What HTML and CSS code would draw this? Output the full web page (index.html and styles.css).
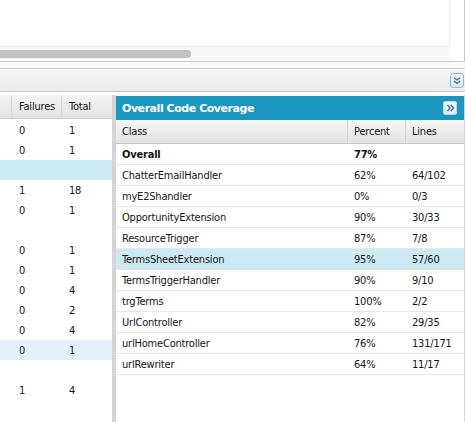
FILE: index.html
```html
<!DOCTYPE html>
<html>
<head>
<meta charset="utf-8">
<link rel="stylesheet" href="styles.css">
</head>
<body>
<div class="editor">
  <div class="editor-main">
    <div class="editor-content"></div>
    <div class="hscroll"><div class="hthumb"></div></div>
  </div>
  <div class="vscroll"><div class="vtrack"></div><div class="corner"></div></div>
</div>
<div class="spacer"></div>
<div class="toolbar">
  <button class="tb-btn" aria-label="collapse">
    <svg width="8" height="9" viewBox="0 0 8 9"><path d="M1 1.5 L4 4 L7 1.5 M1 5 L4 7.5 L7 5" fill="none" stroke="#3b6ea8" stroke-width="1.3"/></svg>
  </button>
</div>
<div class="panels">
  <div class="tests">
    <div class="t-head">
      <div class="c0"></div><div class="c1">Failures</div><div class="c2">Total</div>
    </div>
    <div class="t-row"><div class="c0"></div><div class="c1">0</div><div class="c2">1</div></div>
    <div class="t-row"><div class="c0"></div><div class="c1">0</div><div class="c2">1</div></div>
    <div class="t-row sel"><div class="c0"></div><div class="c1"></div><div class="c2"></div></div>
    <div class="t-row"><div class="c0"></div><div class="c1">1</div><div class="c2">18</div></div>
    <div class="t-row"><div class="c0"></div><div class="c1">0</div><div class="c2">1</div></div>
    <div class="t-row"><div class="c0"></div><div class="c1"></div><div class="c2"></div></div>
    <div class="t-row"><div class="c0"></div><div class="c1">0</div><div class="c2">1</div></div>
    <div class="t-row"><div class="c0"></div><div class="c1">0</div><div class="c2">1</div></div>
    <div class="t-row"><div class="c0"></div><div class="c1">0</div><div class="c2">4</div></div>
    <div class="t-row"><div class="c0"></div><div class="c1">0</div><div class="c2">2</div></div>
    <div class="t-row"><div class="c0"></div><div class="c1">0</div><div class="c2">4</div></div>
    <div class="t-row hover"><div class="c0"></div><div class="c1">0</div><div class="c2">1</div></div>
    <div class="t-row"><div class="c0"></div><div class="c1"></div><div class="c2"></div></div>
    <div class="t-row"><div class="c0"></div><div class="c1">1</div><div class="c2">4</div></div>
  </div>
  <div class="splitter"></div>
  <div class="coverage">
    <div class="cov-title">
      <span>Overall Code Coverage</span>
      <button class="title-btn" aria-label="expand">
        <svg width="9" height="8" viewBox="0 0 9 8"><path d="M1.5 1 L4 4 L1.5 7 M5 1 L7.5 4 L5 7" fill="none" stroke="#3b6ea8" stroke-width="1.3"/></svg>
      </button>
    </div>
    <div class="cov-head">
      <div class="k">Class</div><div class="p">Percent</div><div class="l">Lines</div>
    </div>
    <div class="cov-row bold"><div class="k">Overall</div><div class="p">77%</div><div class="l"></div></div>
    <div class="cov-row"><div class="k">ChatterEmailHandler</div><div class="p">62%</div><div class="l">64/102</div></div>
    <div class="cov-row"><div class="k">myE2Shandler</div><div class="p">0%</div><div class="l">0/3</div></div>
    <div class="cov-row"><div class="k">OpportunityExtension</div><div class="p">90%</div><div class="l">30/33</div></div>
    <div class="cov-row"><div class="k">ResourceTrigger</div><div class="p">87%</div><div class="l">7/8</div></div>
    <div class="cov-row sel"><div class="k">TermsSheetExtension</div><div class="p">95%</div><div class="l">57/60</div></div>
    <div class="cov-row"><div class="k">TermsTriggerHandler</div><div class="p">90%</div><div class="l">9/10</div></div>
    <div class="cov-row"><div class="k">trgTerms</div><div class="p">100%</div><div class="l">2/2</div></div>
    <div class="cov-row"><div class="k">UrlController</div><div class="p">82%</div><div class="l">29/35</div></div>
    <div class="cov-row"><div class="k">urlHomeController</div><div class="p">76%</div><div class="l">131/171</div></div>
    <div class="cov-row"><div class="k">urlRewriter</div><div class="p">64%</div><div class="l">11/17</div></div>
  </div>
</div>
</body>
</html>
```
FILE: styles.css
```css
* { box-sizing: border-box; }
html, body { margin: 0; padding: 0; }
body {
  width: 465px;
  height: 422px;
  overflow: hidden;
  background: #fff;
  font-family: "DejaVu Sans Condensed", "DejaVu Sans", sans-serif;
  font-size: 11px;
  letter-spacing: -0.2px;
  color: #151515;
}
.editor {
  display: flex;
  height: 62px;
  border-right: 1px solid #c9c9c9;
  border-bottom: 1px solid #cfcfcf;
}
.editor-main { flex: 1; display: flex; flex-direction: column; }
.editor-content { flex: 1; background: #fff; }
.hscroll {
  height: 15px;
  background: #f8f8f8;
  border-top: 1px solid #e6e6e6;
  padding-top: 3px;
}
.hthumb {
  width: 191px;
  height: 8px;
  background: #c2c2c2;
  border-radius: 0 4px 4px 0;
}
.vscroll { width: 15px; display: flex; flex-direction: column; }
.vtrack { flex: 1; border-left: 1px solid #ececec; background: #fff; }
.corner { height: 15px; background: #fff; }
.spacer { height: 6px; background: #fafafa; }
.toolbar {
  height: 24px;
  border-top: 1px solid #cfcfcf;
  border-bottom: 1px solid #c8c8c8;
  background: linear-gradient(#f7f7f7, #ebebeb);
  display: flex;
  justify-content: flex-end;
  align-items: center;
  padding-right: 1px;
}
.tb-btn {
  width: 14px;
  height: 15px;
  padding: 0;
  border: 1px solid #8fb6e2;
  border-radius: 3px;
  background: linear-gradient(#f4f8fd, #dce9f7);
  display: flex;
  align-items: center;
  justify-content: center;
}
.panels {
  display: flex;
  margin-top: 3px;
  height: 331px;
}
.tests { width: 112px; }
.t-head {
  display: flex;
  height: 24px;
  background: linear-gradient(#f4f4f4, #e4e4e4);
  border-bottom: 1px solid #cdcdcd;
  align-items: stretch;
}
.t-head > div { display: flex; align-items: center; padding-left: 7px; border-right: 1px solid #d4d4d4; }
.t-head > div:last-child { border-right: none; }
.c0 { width: 12px; padding: 0 !important; }
.c1 { width: 50px; }
.c2 { width: 50px; }
.t-row {
  display: flex;
  height: 20px;
  align-items: center;
}
.t-row > div { padding-left: 7px; }
.t-row > .c0 { padding: 0; }
.t-head + .t-row { margin-top: 1px; }
.t-row.sel { background: #cde9f4; }
.t-row.hover { background: #e3f1fc; }
.splitter { width: 4px; background: #d5d5d5; }
.coverage { flex: 1; display: flex; flex-direction: column; border-right: 1px solid #d8d8d8; }
.cov-title {
  margin-top: 1px;
  height: 24px;
  background: #1b96c1;
  color: #fff;
  font-family: "DejaVu Sans", sans-serif;
  font-weight: bold;
  font-size: 11px;
  letter-spacing: -0.45px;
  display: flex;
  align-items: center;
  justify-content: space-between;
  padding: 0 7px 0 6px;
}
.title-btn {
  width: 14px;
  height: 14px;
  padding: 0;
  border: 1px solid #b9d4ee;
  border-radius: 2px;
  background: linear-gradient(#f7fafd, #dfeaf6);
  display: flex;
  align-items: center;
  justify-content: center;
}
.cov-head {
  display: flex;
  height: 24px;
  background: linear-gradient(#f7f7f7, #e2e2e2);
  border-bottom: 1px solid #c6c6c6;
}
.cov-head > div { display: flex; align-items: center; padding-left: 6px; border-right: 1px solid #d3d3d3; }
.cov-head > div:last-child { border-right: none; }
.k { width: 232px; }
.p { width: 58px; }
.l { flex: 1; }
.cov-row {
  display: flex;
  height: 21px;
  align-items: center;
  border-bottom: 1px solid #e8e8e8;
}
.cov-row > div { padding-left: 6px; }
.cov-row.bold { font-weight: bold; }
.cov-row.sel { background: #cde9f4; }
```
